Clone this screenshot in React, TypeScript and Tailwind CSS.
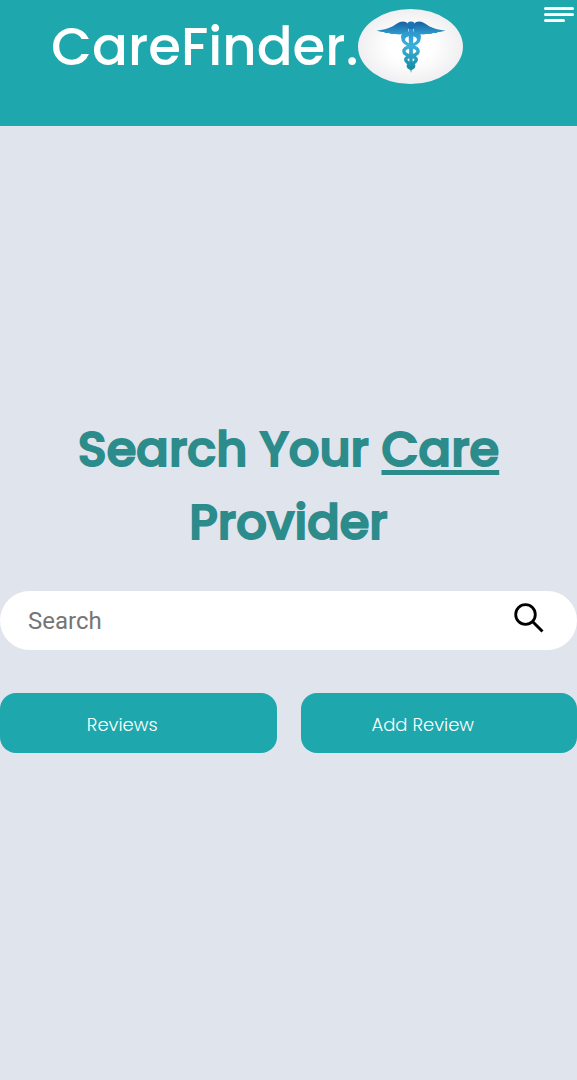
function Caduceus() {
  return (
    <svg viewBox="0 0 70 52" className="h-[52px] w-[70px]" role="img" aria-label="Caduceus">
      <defs>
        <linearGradient id="wing" x1="0" y1="0" x2="0" y2="1">
          <stop offset="0" stopColor="#175f9f" />
          <stop offset="1" stopColor="#2f9fd0" />
        </linearGradient>
        <linearGradient id="snake" gradientUnits="userSpaceOnUse" x1="0" y1="8" x2="0" y2="50">
          <stop offset="0" stopColor="#2b92cc" />
          <stop offset="0.4" stopColor="#3bb0dc" />
          <stop offset="1" stopColor="#138a9e" />
        </linearGradient>
      </defs>
      <path d="M32 3C29-.5 25 0 21 2.500C15 7 8 9 .5 9.500C4 11 6 11 8 11C9 12.500 12 12 13 12C15 13.500 18 13 19 13C23 14 28 13 32 13Z" fill="url(#wing)" />
      <path d="M38 3C41-.5 45 0 49 2.500C55 7 62 9 69.500 9.500C66 11 64 11 62 11C61 12.500 58 12 57 12C55 13.500 52 13 51 13C47 14 42 13 38 13Z" fill="url(#wing)" />
      <circle cx="35" cy="4.500" r="4" fill="#1873b7" />
      <path d="M32.500 8H37.500L36.500 45L35 52L33.500 45Z" fill="url(#snake)" />
      <g fill="none" stroke="url(#snake)" strokeWidth="3.400" strokeLinecap="round">
        <path d="M27 17C25 11 35 11 41 15C45 19 42 22 35 25C25 28 26 33 35 35C43 37 41 41 35 43C31 44 32 46 34 47" />
        <path d="M43 17C45 11 35 11 29 15C25 19 28 22 35 25C45 28 44 33 35 35C27 37 29 41 35 43C39 44 38 46 36 47" />
      </g>
    </svg>
  );
}

function Header() {
  return (
    <header className="flex h-[126px] items-start bg-[#1ea7ac] pl-[51px]">
      <a href="/" className="flex items-start text-white">
        <span className="pt-2 text-[53px] leading-[78px] font-medium">CareFinder.</span>
        <span className="mt-[9px] flex h-[75px] w-[105px] justify-center rounded-[50%] bg-radial from-white from-30% to-[#e4e4e8] pt-3">
          <Caduceus />
        </span>
      </a>
      <button
        type="button"
        aria-label="Open menu"
        className="mt-[7px] mr-[3px] ml-auto flex flex-col gap-[3px]"
      >
        <span className="h-[3px] w-[30px] rounded-full bg-white" />
        <span className="h-[3px] w-[30px] rounded-full bg-white" />
        <span className="h-[3px] w-[21px] rounded-full bg-white" />
      </button>
    </header>
  );
}

function SearchBar() {
  return (
    <form
      role="search"
      onSubmit={(event) => event.preventDefault()}
      className="mt-8 flex h-[59px] items-center rounded-full bg-white pr-[33px] pl-7"
    >
      <input
        type="search"
        aria-label="Search"
        placeholder="Search"
        className="min-w-0 flex-1 bg-transparent font-['Roboto',sans-serif] text-2xl text-black outline-none placeholder:text-[#757575]"
      />
      <button type="submit" aria-label="Submit search" className="mb-1.5">
        <svg viewBox="0 0 30 30" className="size-[30px]" fill="none" stroke="#000" strokeWidth="2.800">
          <circle cx="11.500" cy="11.500" r="9.800" />
          <path d="M18.500 18.500L28.500 28.500" strokeWidth="3" />
        </svg>
      </button>
    </form>
  );
}

function ActionButton({ label }: { label: string }) {
  return (
    <button
      type="button"
      className="h-[60px] rounded-2xl bg-[#1ea7ac] pt-1 pr-8 text-lg font-light text-white"
    >
      {label}
    </button>
  );
}

export default function App() {
  return (
    <div className="flex min-h-screen flex-col bg-[#e0e4ed] font-['Poppins','Inter',sans-serif]">
      <Header />
      <main className="flex flex-1 flex-col justify-center pb-10">
        <h1 className="px-12 text-center text-[48px] leading-[73px] font-medium text-[#2c8b8b] [-webkit-text-stroke:2px_#2c8b8b]">
          Search Your{" "}
          <span className="underline decoration-5 underline-offset-4 [text-decoration-skip-ink:none]">Care</span>{" "}
          Provider
        </h1>
        <SearchBar />
        <div className="mt-[43px] grid grid-cols-2 gap-6">
          <ActionButton label="Reviews" />
          <ActionButton label="Add Review" />
        </div>
      </main>
    </div>
  );
}
